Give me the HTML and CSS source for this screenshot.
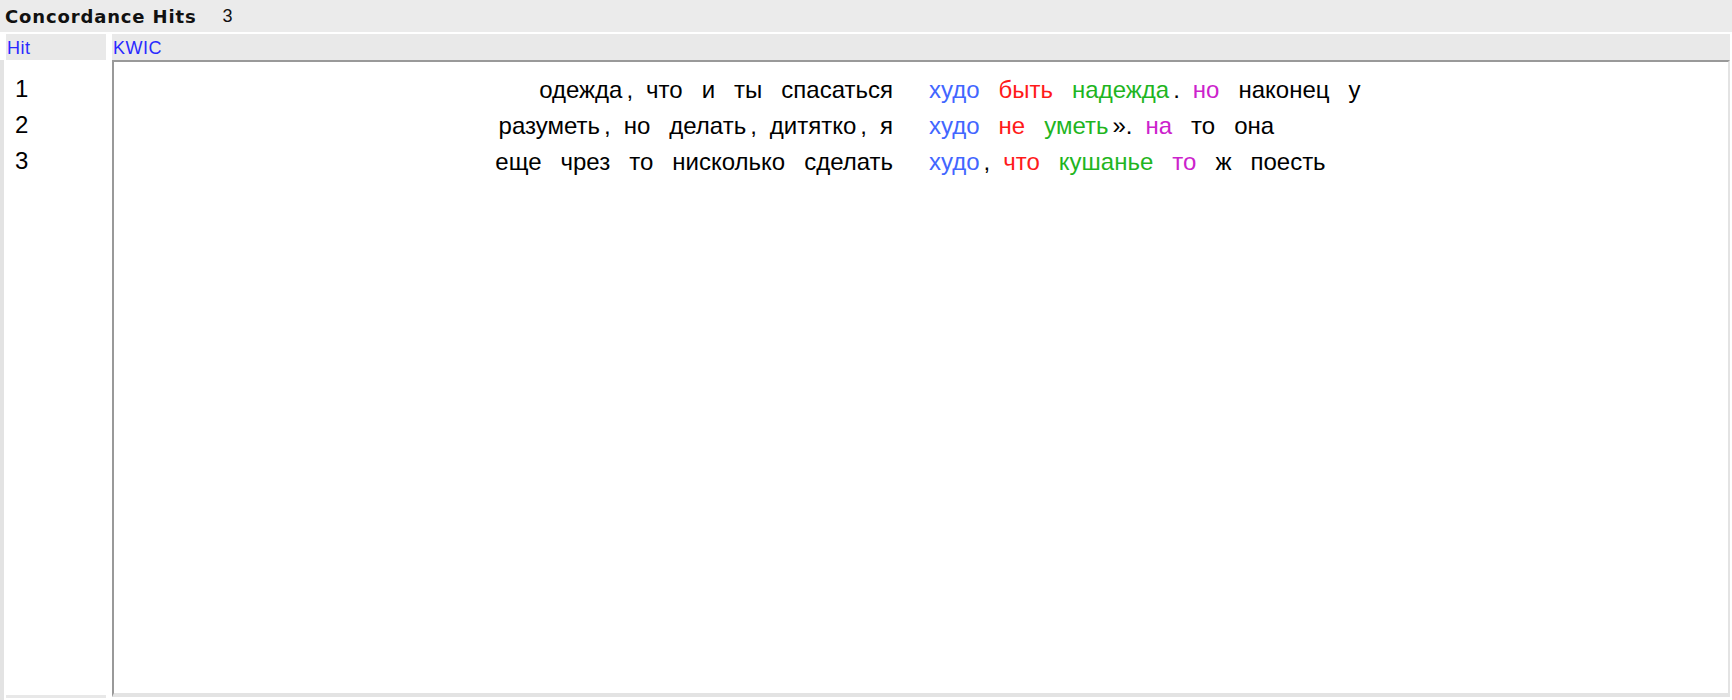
FILE: index.html
```html
<!DOCTYPE html>
<html>
<head>
<meta charset="utf-8">
<link rel="stylesheet" href="styles.css">
</head>
<body>
<div class="topbar">
  <span class="title">Concordance Hits</span>
  <span class="count">3</span>
</div>
<div class="heads">
  <div class="h-hit">Hit</div>
  <div class="h-kwic">KWIC</div>
</div>
<div class="body">
  <div class="strip"></div>
  <div class="hits">
    <div class="hit">1</div>
    <div class="hit">2</div>
    <div class="hit">3</div>
  </div>
  <div class="panel">
    <div class="row">
      <div class="left"><span class="w">одежда</span><span class="p">,</span><span class="w">что</span><span class="w">и</span><span class="w">ты</span><span class="w">спасаться</span></div>
      <span class="node">худо</span>
      <div class="right"><span class="w r1">быть</span><span class="w r2">надежда</span><span class="p">.</span><span class="w r3">но</span><span class="w">наконец</span><span class="w">у</span></div>
    </div>
    <div class="row">
      <div class="left"><span class="w">разуметь</span><span class="p">,</span><span class="w">но</span><span class="w">делать</span><span class="p">,</span><span class="w">дитятко</span><span class="p">,</span><span class="w">я</span></div>
      <span class="node">худо</span>
      <div class="right"><span class="w r1">не</span><span class="w r2">уметь</span><span class="p">».</span><span class="w r3">на</span><span class="w">то</span><span class="w">она</span></div>
    </div>
    <div class="row">
      <div class="left"><span class="w">еще</span><span class="w">чрез</span><span class="w">то</span><span class="w">нисколько</span><span class="w">сделать</span></div>
      <span class="node">худо</span>
      <div class="right"><span class="p">,</span><span class="w r1">что</span><span class="w r2">кушанье</span><span class="w r3">то</span><span class="w">ж</span><span class="w">поесть</span></div>
    </div>
  </div>
</div>
</body>
</html>
```

FILE: styles.css
```css
* { box-sizing: border-box; }
html, body { margin: 0; padding: 0; }
body {
  width: 1732px;
  height: 700px;
  overflow: hidden;
  background: #ffffff;
  font-family: "Liberation Sans", Arial, sans-serif;
  color: #000;
}
.topbar {
  height: 32px;
  background: #ebebeb;
  display: flex;
  align-items: center;
  padding-left: 5px;
  margin-bottom: 2px;
}
.title {
  font-family: "DejaVu Sans", sans-serif;
  font-weight: bold;
  font-size: 18px;
  letter-spacing: 0.85px;
  color: #111;
}
.count {
  margin-left: 26px;
  font-size: 18px;
  color: #111;
}
.heads {
  height: 26px;
  display: flex;
}
.h-hit, .h-kwic {
  background: #e9e9e9;
  color: #2a2aff;
  font-size: 18px;
  letter-spacing: 0.5px;
  line-height: 26px;
  padding-top: 1px;
}
.h-hit {
  width: 100px;
  margin-left: 6px;
  padding-left: 1px;
}
.h-kwic {
  flex: 1;
  margin-left: 6px;
  margin-right: 2px;
  padding-left: 1px;
}
.body {
  height: 640px;
  display: flex;
}
.strip {
  width: 4px;
  background: #e3e3e3;
}
.hits {
  width: 100px;
  margin-left: 2px;
  height: 638px;
  padding-top: 11px;
  padding-left: 9px;
  border-bottom: 3px solid #e8e8e8;
}
.hit {
  font-size: 24px;
  line-height: 36px;
}
.panel {
  flex: 1;
  margin-left: 6px;
  margin-right: 2px;
  height: 637px;
  border-top: 2px solid #999999;
  border-left: 2px solid #999999;
  border-right: 2px solid #e3e3e3;
  border-bottom: 4px solid #e3e3e3;
  padding-top: 10px;
}
.row {
  display: flex;
  font-size: 24px;
  line-height: 36px;
  white-space: nowrap;
}
.left {
  width: 779px;
  display: flex;
  justify-content: flex-end;
}
.node {
  margin-left: 36px;
  color: #4266ff;
}
.right {
  display: flex;
}
.w { margin-left: 19px; }
.p { margin-left: 4px; }
.p + .w { margin-left: 13px; }
.r1 { color: #ff1a1a; }
.r2 { color: #1fb51f; }
.r3 { color: #cc22cc; }
```
